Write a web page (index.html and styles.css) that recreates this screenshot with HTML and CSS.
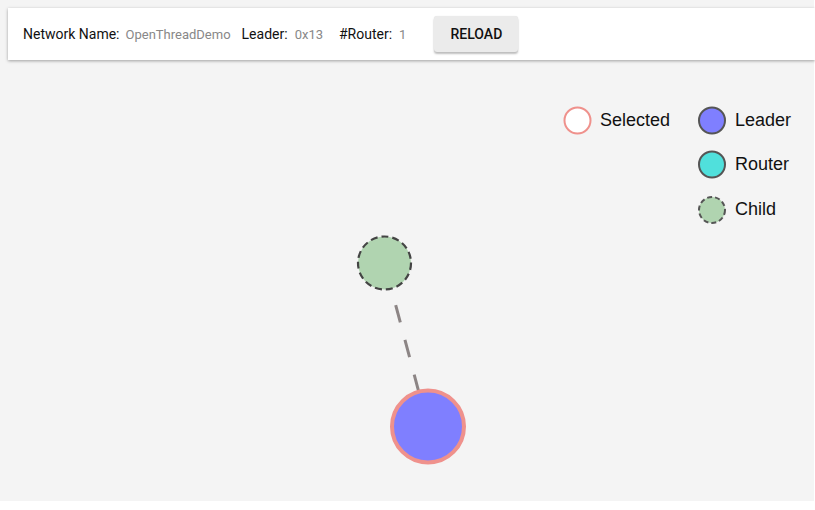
FILE: index.html
```html
<!DOCTYPE html>
<html>
<head>
<meta charset="utf-8">
<link rel="stylesheet" href="styles.css">
</head>
<body>
<div class="page">
  <svg class="canvas" width="814" height="501" viewBox="0 0 814 501">
    <line class="link" x1="384.5" y1="263" x2="428" y2="426.5"/>
    <circle class="node child" cx="384.5" cy="263" r="26.5"/>
    <circle class="node leader selected" cx="428" cy="426.5" r="36"/>
    <g class="legend">
      <circle class="lg-selected" cx="577.5" cy="120.5" r="13"/>
      <text x="600" y="126">Selected</text>
      <circle class="lg-leader" cx="712" cy="120.5" r="13"/>
      <text x="735" y="126">Leader</text>
      <circle class="lg-router" cx="712" cy="164.5" r="13"/>
      <text x="735" y="170">Router</text>
      <circle class="lg-child" cx="712" cy="210" r="13"/>
      <text x="735" y="215">Child</text>
    </g>
  </svg>
  <div class="toolbar">
    <div class="field"><span class="label">Network Name:</span><span class="value">OpenThreadDemo</span></div>
    <div class="field"><span class="label">Leader:</span><span class="value">0x13</span></div>
    <div class="field"><span class="label">#Router:</span><span class="value">1</span></div>
    <button class="reload">RELOAD</button>
  </div>
</div>
</body>
</html>
```

FILE: styles.css
```css
html, body {
  margin: 0;
  padding: 0;
  background: #ffffff;
}
.page {
  position: relative;
  width: 814px;
  height: 501px;
  background: #f4f4f4;
  padding: 8px 0 0 8px;
  box-sizing: border-box;
  font-family: Roboto, "Liberation Sans", sans-serif;
}
.canvas {
  position: absolute;
  left: 0;
  top: 0;
}
.toolbar {
  position: relative;
  width: 807px;
  height: 52px;
  box-sizing: border-box;
  background: #ffffff;
  box-shadow: 0 1px 3px rgba(0,0,0,0.35);
  display: flex;
  align-items: center;
  padding-left: 15px;
}
.field {
  display: flex;
  align-items: baseline;
  margin-right: 11px;
}
.field:nth-child(2) { margin-right: 16px; }
.field:nth-child(3) { margin-right: 28px; }
.label {
  font-size: 14px;
  color: #111111;
  margin-right: 6px;
}
.field:nth-child(2) .label,
.field:nth-child(3) .label { margin-right: 7px; }
.value {
  font-size: 13px;
  color: #888888;
}
.reload {
  width: 84px;
  height: 36px;
  border: none;
  border-radius: 3px;
  background: #ebebeb;
  box-shadow: 0 2px 2px rgba(0,0,0,0.25), 0 0 1px rgba(0,0,0,0.12);
  font-family: Roboto, "Liberation Sans", sans-serif;
  font-weight: 500;
  font-size: 14px;
  color: #111111;
  padding: 0 0 1px 0;
}
.link {
  stroke: #8c8585;
  stroke-width: 3;
  stroke-dasharray: 18 18;
  stroke-dashoffset: 28.5;
}
.node.child {
  fill: #b0d4b0;
  stroke: #444444;
  stroke-width: 2.2;
  stroke-dasharray: 7 4;
}
.node.leader {
  fill: #7f7fff;
}
.node.selected {
  stroke: #ef918c;
  stroke-width: 4;
}
.legend text {
  font-family: "Liberation Sans", Arial, sans-serif;
  font-size: 18px;
  fill: #111111;
}
.lg-selected {
  fill: #ffffff;
  stroke: #ef918c;
  stroke-width: 2;
}
.lg-leader {
  fill: #7f7fff;
  stroke: #555555;
  stroke-width: 2;
}
.lg-router {
  fill: #50e0dc;
  stroke: #555555;
  stroke-width: 2;
}
.lg-child {
  fill: #b0d4b0;
  stroke: #555555;
  stroke-width: 2;
  stroke-dasharray: 5 3;
}
```
